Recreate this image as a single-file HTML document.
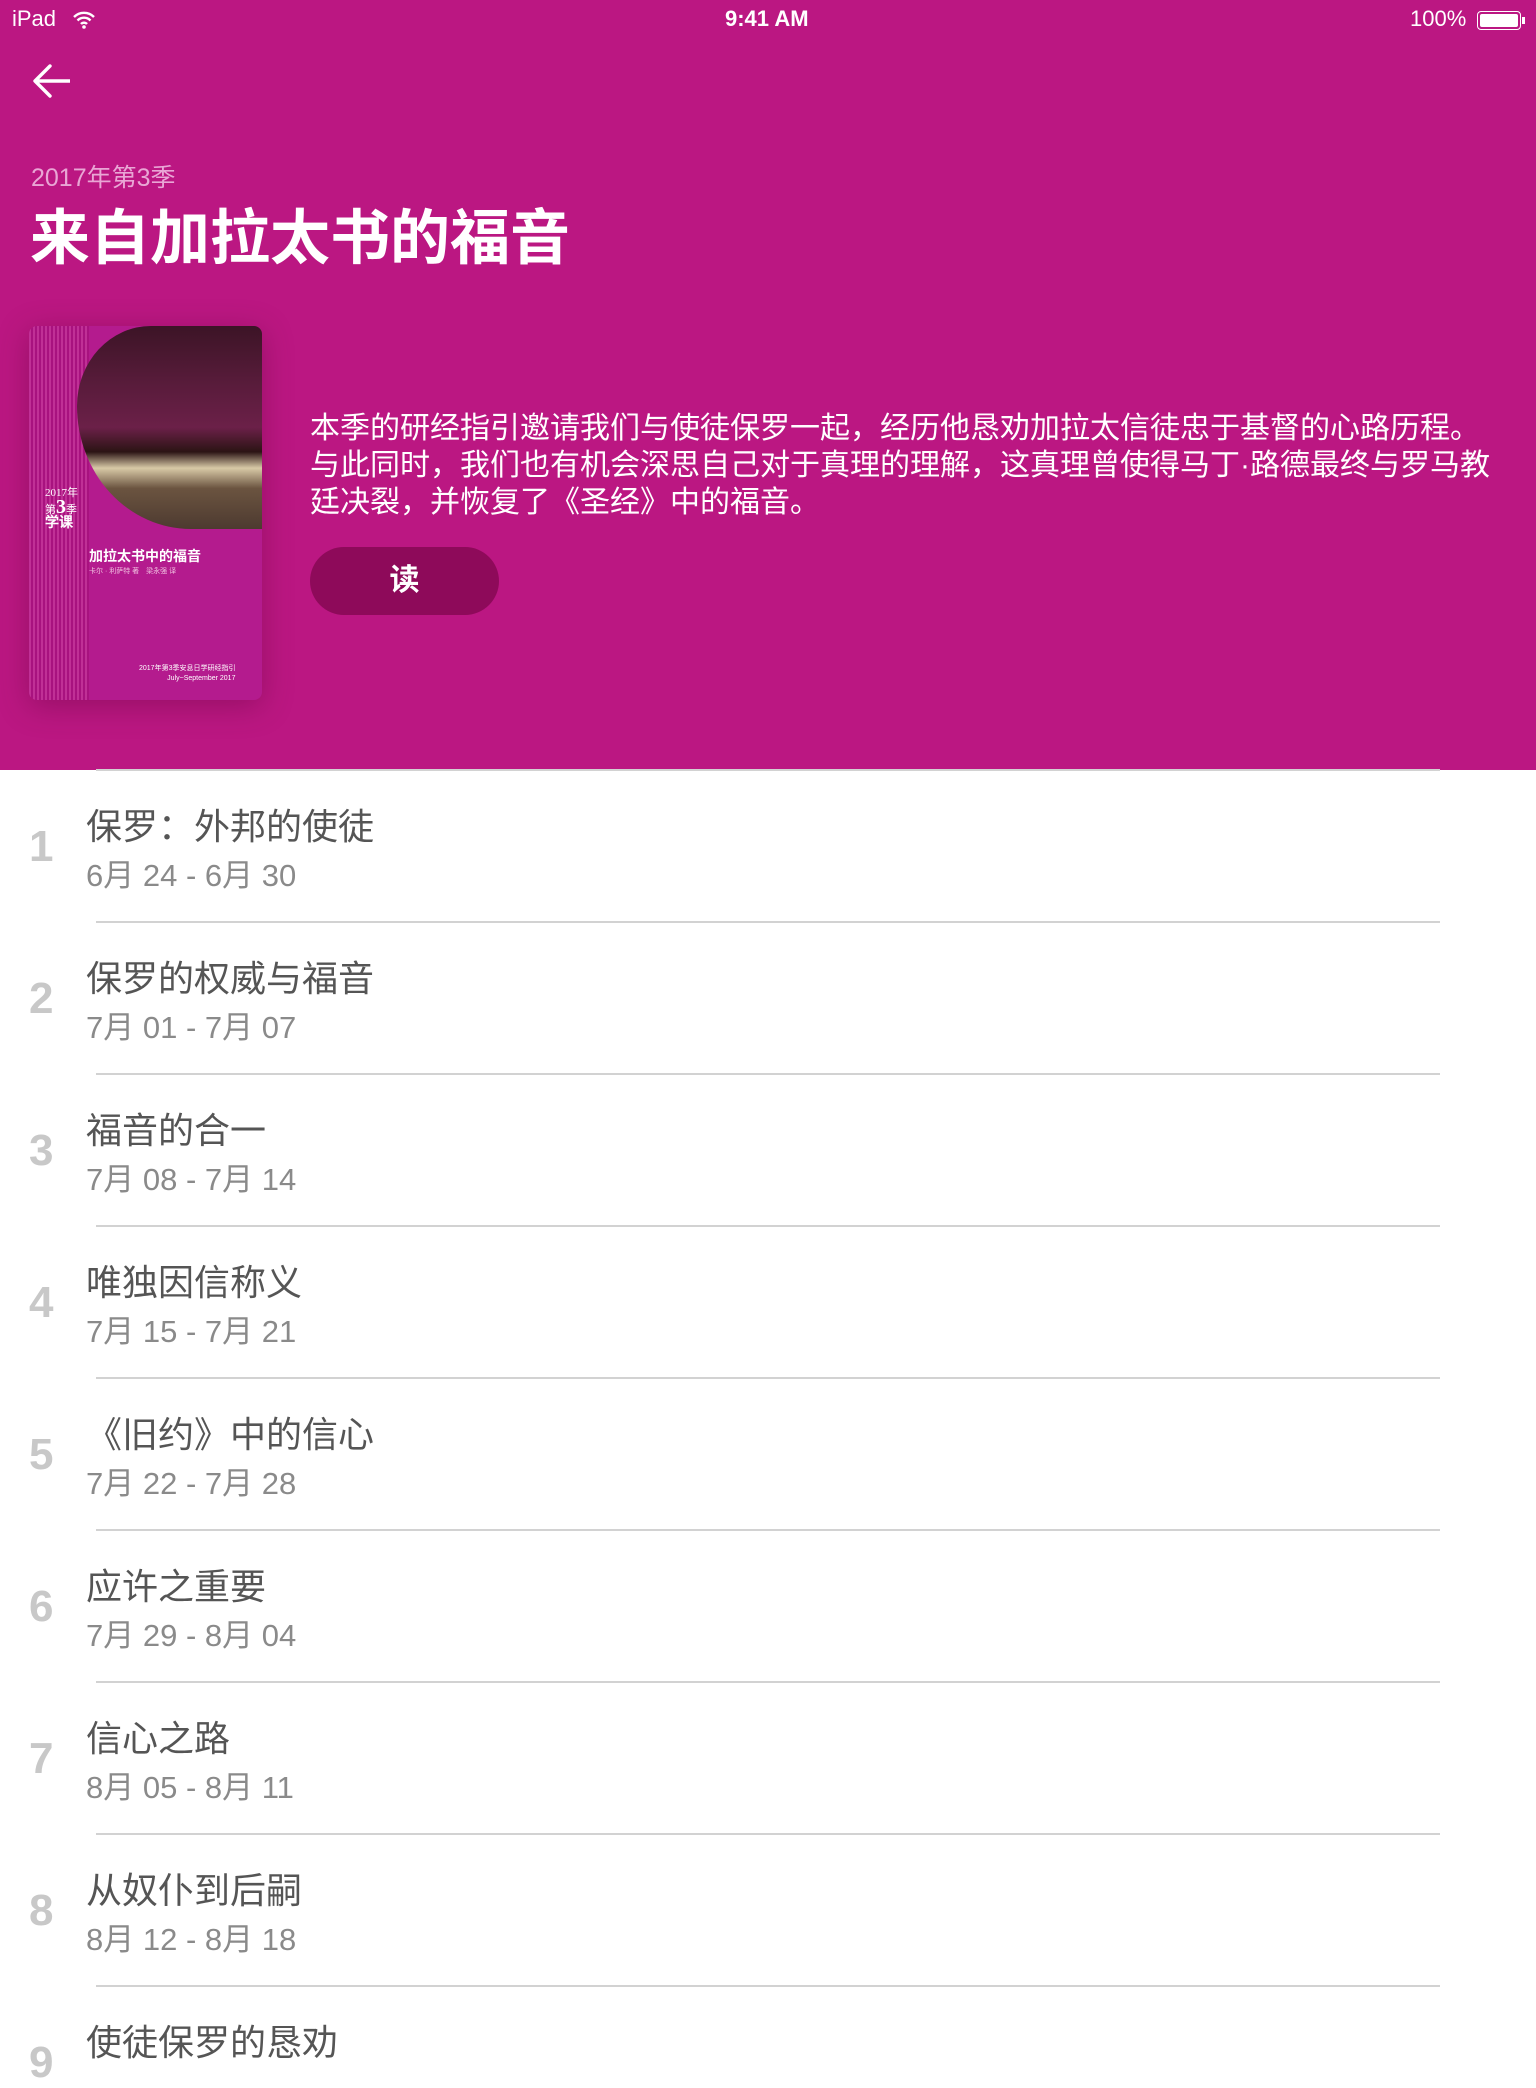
<!DOCTYPE html>
<html><head><meta charset="utf-8"><style>
*{margin:0;padding:0;box-sizing:border-box}
body{width:1536px;height:2048px;overflow:hidden;background:#fff;font-family:"Liberation Sans","Noto Sans CJK SC",sans-serif;position:relative}
.hdr{position:absolute;left:0;top:0;width:1536px;height:770px;background:#bb1782}
.sb{position:absolute;top:6px;color:#fff;font-size:22px}
.sub{position:absolute;left:31px;top:158px;font-size:25px;color:#e9a6d5}
.title{position:absolute;left:30px;top:190px;font-size:60px;color:#fff;font-weight:bold}
.desc{position:absolute;left:310px;top:410px;width:1180px;font-size:30px;line-height:37px;color:#fff}
.btn{position:absolute;left:310px;top:547px;width:189px;height:68px;border-radius:34px;background:#8e0a5a;color:#fff;font-size:30px;text-align:center;line-height:68px;font-weight:bold}
.cover{position:absolute;left:29px;top:326px;width:233px;height:374px;border-radius:8px;overflow:hidden;background:#b41b8e;box-shadow:0 6px 30px rgba(80,0,50,.35)}
.stripes{position:absolute;left:0;top:0;width:60px;height:100%;background:repeating-linear-gradient(90deg,#c03096 0 2px,#a8127f 2px 4px)}
.img{position:absolute;left:48px;top:0;width:185px;height:203px;border-bottom-left-radius:185px 200px;border-top-left-radius:120px 130px;background:linear-gradient(180deg,#3c1426 0%,#5a1c3c 30%,#6b2048 50%,#2b1414 62%,#d8c9a6 70%,#6b5440 80%,#4d3a30 100%);overflow:hidden}
.sep{position:absolute;left:96px;width:1344px;height:2px;background:#d2d2d2}
.num{position:absolute;left:29px;font-size:44px;color:#c8c8c8;font-weight:bold}
.t{position:absolute;left:86px;font-size:36px;color:#555}
.d{position:absolute;left:86px;font-size:31px;color:#8a8a8a}
</style></head><body>
<div class="hdr">
<div class="sb" style="left:12px">iPad</div>
<svg style="position:absolute;left:72px;top:10px" width="24" height="20" viewBox="0 0 24 20"><path d="M2 7a14 14 0 0 1 20 0M5.5 10.5a9 9 0 0 1 13 0M9 14a4 4 0 0 1 6 0" stroke="#fff" stroke-width="2.4" fill="none"/><circle cx="12" cy="17" r="1.8" fill="#fff"/></svg>
<div class="sb" style="left:725px;font-weight:bold">9:41 AM</div>
<div class="sb" style="left:1410px">100%</div>
<div style="position:absolute;left:1477px;top:11px;width:44px;height:19px;border:1.5px solid #fff;border-radius:4px;padding:2px"><div style="width:100%;height:100%;background:#fff;border-radius:2px"></div></div>
<div style="position:absolute;left:1522px;top:17px;width:3px;height:7px;background:#fff"></div>
<svg style="position:absolute;left:26px;top:62px" width="44" height="40" viewBox="0 0 44 40"><path d="M10 19H45M24 4L9 19L24 34" stroke="#fff" stroke-width="3.4" fill="none" stroke-linecap="round" stroke-linejoin="round"/></svg>
<div class="sub">2017年第3季</div>
<div class="title">来自加拉太书的福音</div>
<div class="cover"><div class="stripes"></div><div class="img"></div>
<div style="position:absolute;left:16px;top:160px;color:#fff;font-size:11px;font-family:'Liberation Serif',serif;line-height:14px">2017年<br>第<b style="font-size:20px">3</b>季<br><b style="font-size:14px">学课</b></div>
<div style="position:absolute;left:60px;top:220px;color:#fff;font-size:14px;font-weight:bold">加拉太书中的福音</div>
<div style="position:absolute;left:60px;top:240px;color:#f0c0e0;font-size:7px">卡尔 · 利萨特 著　梁永强 译</div>
<div style="position:absolute;left:110px;top:338px;color:#fff;font-size:7px;line-height:10px;text-align:right">2017年第3季安息日学研经指引<br>July~September 2017</div>
</div>
<div class="desc">本季的研经指引邀请我们与使徒保罗一起，经历他恳劝加拉太信徒忠于基督的心路历程。<br>与此同时，我们也有机会深思自己对于真理的理解，这真理曾使得马丁·路德最终与罗马教廷决裂，并恢复了《圣经》中的福音。</div>
<div class="btn">读</div>
</div>
<div class="sep" style="top:769px;height:2px"></div>
<div id="list"></div>
<script>
var items=[["保罗：外邦的使徒","6月 24 - 6月 30"],["保罗的权威与福音","7月 01 - 7月 07"],["福音的合一","7月 08 - 7月 14"],["唯独因信称义","7月 15 - 7月 21"],["《旧约》中的信心","7月 22 - 7月 28"],["应许之重要","7月 29 - 8月 04"],["信心之路","8月 05 - 8月 11"],["从奴仆到后嗣","8月 12 - 8月 18"],["使徒保罗的恳劝",""]];
var h="";items.forEach(function(it,i){var top=770+152*i;
h+='<div class="num" style="top:'+(top+52)+'px">'+(i+1)+'</div><div class="t" style="top:'+(top+28)+'px">'+it[0]+'</div><div class="d" style="top:'+(top+80)+'px">'+it[1]+'</div>';
if(i<8)h+='<div class="sep" style="top:'+(top+151)+'px"></div>';});
document.getElementById("list").innerHTML=h;
</script>
</body></html>
